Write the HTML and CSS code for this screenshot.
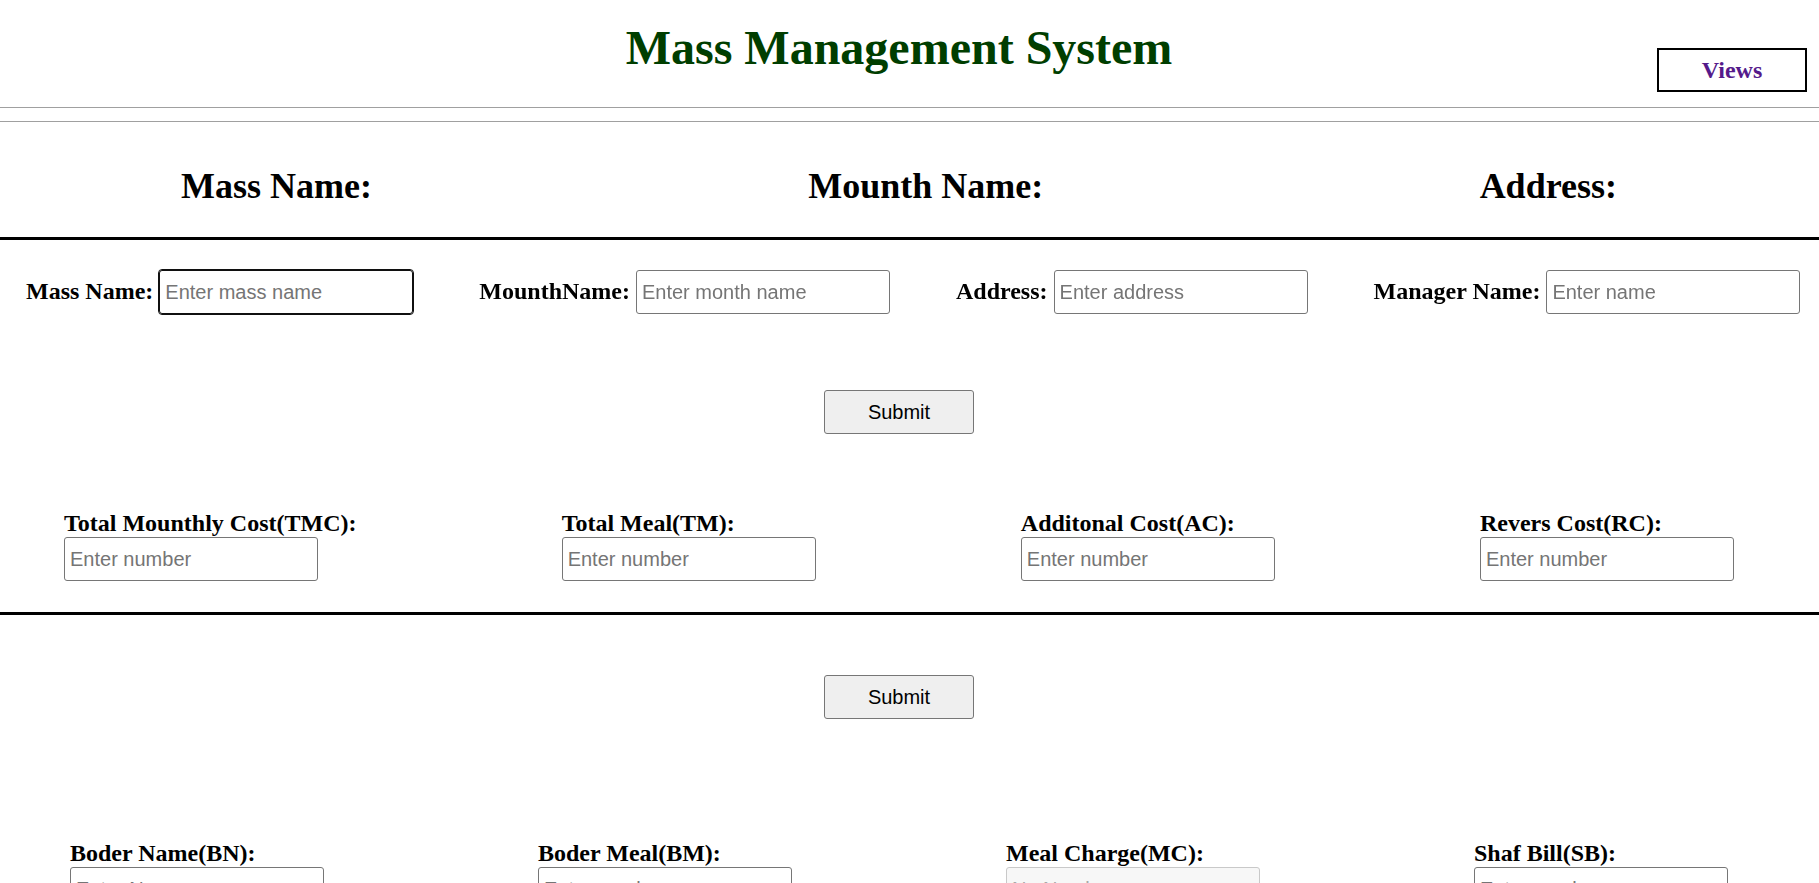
FILE: index.html
```html
<!DOCTYPE html>
<html lang="en">
<head>
<meta charset="utf-8">
<title>Mass Management System</title>
<link rel="stylesheet" href="styles.css">
</head>
<body>
  <header class="top wrap">
    <div class="top-side"></div>
    <h1 class="title">Mass Management System</h1>
    <div class="top-side top-right"><a class="views" href="#">Views</a></div>
  </header>
  <div class="double-rule"></div>

  <section class="titles wrap">
    <h2 class="sub">Mass Name:</h2>
    <h2 class="sub">Mounth Name:</h2>
    <h2 class="sub">Address:</h2>
  </section>
  <div class="thick-rule"></div>

  <form class="wrap">
    <div class="row-inline">
      <div class="field-inline">
        <label class="lbl">Mass Name:</label>
        <input class="inp focused" type="text" placeholder="Enter mass name" autofocus>
      </div>
      <div class="field-inline">
        <label class="lbl">MounthName:</label>
        <input class="inp" type="text" placeholder="Enter month name">
      </div>
      <div class="field-inline">
        <label class="lbl">Address:</label>
        <input class="inp" type="text" placeholder="Enter address">
      </div>
      <div class="field-inline">
        <label class="lbl">Manager Name:</label>
        <input class="inp" type="text" placeholder="Enter name">
      </div>
    </div>

    <div class="submit-row first">
      <button class="btn" type="button">Submit</button>
    </div>

    <div class="row-stack cost-row">
      <div class="field-stack">
        <label class="lbl">Total Mounthly Cost(TMC):</label>
        <input class="inp" type="text" placeholder="Enter number">
      </div>
      <div class="field-stack">
        <label class="lbl">Total Meal(TM):</label>
        <input class="inp" type="text" placeholder="Enter number">
      </div>
      <div class="field-stack">
        <label class="lbl">Additonal Cost(AC):</label>
        <input class="inp" type="text" placeholder="Enter number">
      </div>
      <div class="field-stack">
        <label class="lbl">Revers Cost(RC):</label>
        <input class="inp" type="text" placeholder="Enter number">
      </div>
    </div>
  </form>
  <div class="thick-rule"></div>

  <section class="wrap">
    <div class="submit-row second">
      <button class="btn" type="button">Submit</button>
    </div>

    <div class="row-stack boder-row">
      <div class="field-stack">
        <label class="lbl">Boder Name(BN):</label>
        <input class="inp" type="text" placeholder="Enter Name">
      </div>
      <div class="field-stack">
        <label class="lbl">Boder Meal(BM):</label>
        <input class="inp" type="text" placeholder="Enter number">
      </div>
      <div class="field-stack">
        <label class="lbl">Meal Charge(MC):</label>
        <input class="inp" type="text" placeholder="No Number" disabled>
      </div>
      <div class="field-stack">
        <label class="lbl">Shaf Bill(SB):</label>
        <input class="inp" type="text" placeholder="Enter number">
      </div>
    </div>
  </section>
</body>
</html>
```

FILE: styles.css
```css
html, body {
  margin: 0;
  padding: 0;
  background: #ffffff;
}

body {
  font-family: "Liberation Serif", "Times New Roman", serif;
  color: #000000;
  overflow: hidden;
}

.wrap {
  width: 1798px;
  box-sizing: border-box;
}

/* Header */
.top {
  display: grid;
  grid-template-columns: 1fr auto 1fr;
  height: 107px;
  align-items: start;
}

.title {
  margin: 0;
  padding-top: 20px;
  font-size: 48px;
  line-height: 56px;
  font-weight: bold;
  color: #003e00;
  white-space: nowrap;
}

.top-right {
  display: flex;
  justify-content: flex-end;
  margin-right: -9px;
}

.views {
  display: block;
  margin-top: 48px;
  width: 146px;
  height: 40px;
  line-height: 40px;
  border: 2px solid #000000;
  text-align: center;
  font-size: 24px;
  font-weight: bold;
  color: #551a8b;
  text-decoration: none;
}

.double-rule {
  height: 13px;
  border-top: 1px solid #a0a0a0;
  border-bottom: 1px solid #a0a0a0;
}

.thick-rule {
  height: 3px;
  background: #000000;
}

/* Section titles */
.titles {
  display: flex;
  justify-content: space-between;
  padding: 43px 181px 30px 181px;
}

.sub {
  margin: 0;
  font-size: 36px;
  line-height: 42px;
  font-weight: bold;
  white-space: nowrap;
}

/* Labels and inputs */
.lbl {
  font-size: 24px;
  line-height: 28px;
  font-weight: bold;
  white-space: nowrap;
}

.inp {
  box-sizing: border-box;
  width: 254px;
  height: 44px;
  margin: 0;
  padding: 0 5px;
  border: 1px solid #767676;
  border-radius: 3px;
  background: #ffffff;
  font-family: "Liberation Sans", Arial, sans-serif;
  font-size: 20px;
  color: #000000;
}

.inp::placeholder {
  color: #757575;
}

.inp.focused {
  border-color: #101010;
  outline: 1px solid #101010;
  outline-offset: 0;
}

.inp.focused:focus {
  outline: 1px solid #101010;
}

.inp:disabled {
  background: #f7f7f7;
  border-color: #c9c9c9;
}

.inp:disabled::placeholder {
  color: #a8a8a8;
}

/* Row 1: inline label + input */
.row-inline {
  display: flex;
  gap: 66px;
  padding: 30px 0 0 26px;
}

.field-inline {
  display: flex;
  align-items: baseline;
  gap: 6px;
  flex: none;
}

/* Submit buttons */
.submit-row {
  display: flex;
  justify-content: center;
}

.submit-row.first {
  padding-top: 76px;
}

.submit-row.second {
  padding-top: 60px;
}

.btn {
  box-sizing: border-box;
  width: 150px;
  height: 44px;
  margin: 0;
  padding: 0;
  border: 1px solid #767676;
  border-radius: 3px;
  background: #efefef;
  font-family: "Liberation Sans", Arial, sans-serif;
  font-size: 20px;
  color: #000000;
}

/* Stacked label over input rows */
.row-stack {
  display: flex;
  justify-content: space-between;
}

.field-stack {
  display: flex;
  flex-direction: column;
  align-items: flex-start;
  flex: none;
}

.cost-row {
  padding: 75px 64px 31px 64px;
}

.boder-row {
  padding: 120px 70px 0 70px;
}
```
